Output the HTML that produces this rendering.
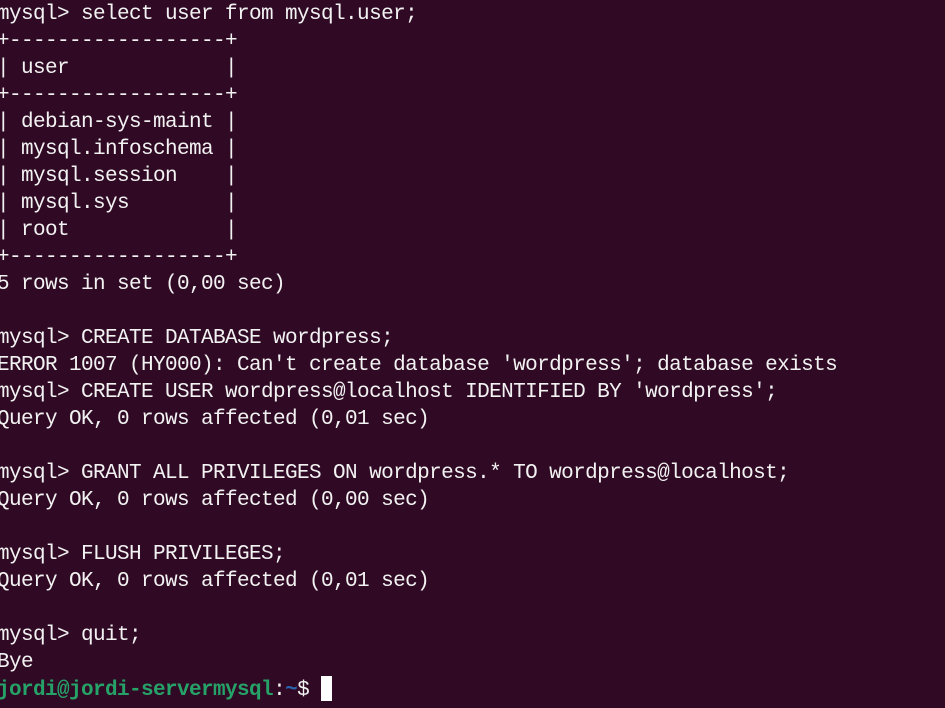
<!DOCTYPE html>
<html><head><style>
html,body{margin:0;padding:0;background:#300a24;width:945px;height:708px;overflow:hidden}
pre{margin:0;position:absolute;left:-3px;top:1px;font-family:"Liberation Mono",monospace;font-size:21px;letter-spacing:-0.6px;line-height:27px;color:#f2f2f2;white-space:pre}
.g{color:#26a269;font-weight:bold}.b{color:#2a64b0;font-weight:bold}
.c{display:inline-block;width:11px;height:25px;background:#fff;vertical-align:-6px}
</style></head><body><pre>mysql&gt; select user from mysql.user;
+------------------+
| user             |
+------------------+
| debian-sys-maint |
| mysql.infoschema |
| mysql.session    |
| mysql.sys        |
| root             |
+------------------+
5 rows in set (0,00 sec)

mysql&gt; CREATE DATABASE wordpress;
ERROR 1007 (HY000): Can't create database 'wordpress'; database exists
mysql&gt; CREATE USER wordpress@localhost IDENTIFIED BY 'wordpress';
Query OK, 0 rows affected (0,01 sec)

mysql&gt; GRANT ALL PRIVILEGES ON wordpress.* TO wordpress@localhost;
Query OK, 0 rows affected (0,00 sec)

mysql&gt; FLUSH PRIVILEGES;
Query OK, 0 rows affected (0,01 sec)

mysql&gt; quit;
Bye
<span class="g">jordi@jordi-servermysql</span>:<span class="b">~</span>$ <span class="c"></span></pre></body></html>
